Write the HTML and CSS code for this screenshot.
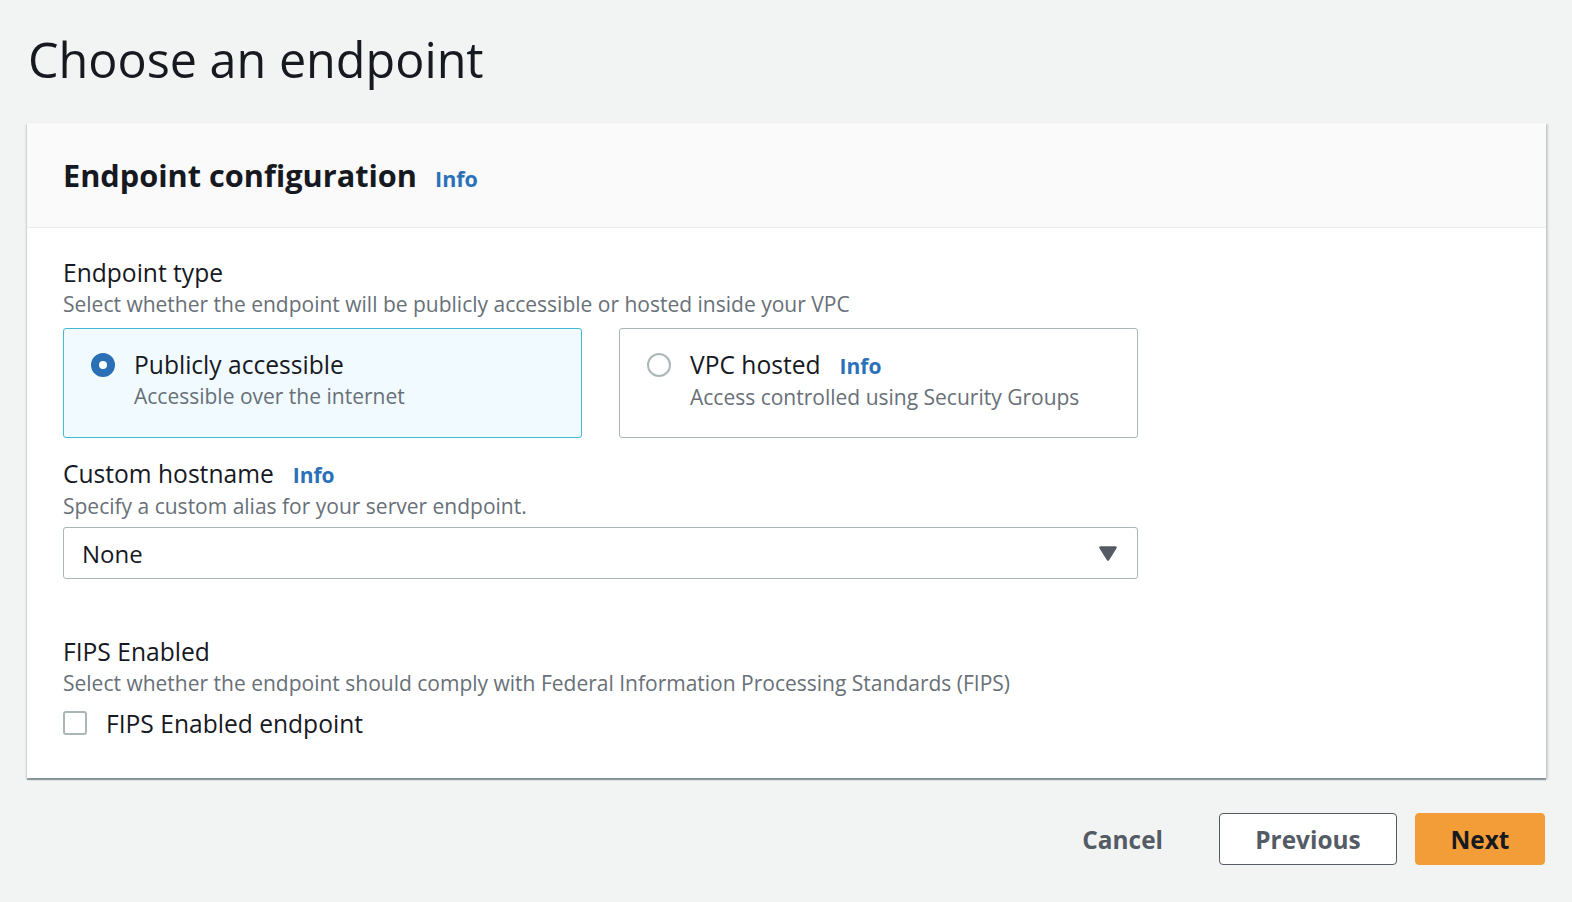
FILE: index.html
```html
<!DOCTYPE html>
<html lang="en">
<head>
<meta charset="utf-8">
<title>Choose an endpoint</title>
<link rel="stylesheet" href="styles.css">
</head>
<body>
<div class="page">
  <h1 class="page-title">Choose an endpoint</h1>

  <section class="container">
    <header class="container-header">
      <h2 class="container-title">Endpoint configuration</h2>
      <a class="info-link" href="#">Info</a>
    </header>

    <div class="container-body">
      <div class="field">
        <div class="field-label">Endpoint type</div>
        <div class="field-desc">Select whether the endpoint will be publicly accessible or hosted inside your VPC</div>
        <div class="tiles">
          <div class="tile tile-selected">
            <span class="radio radio-checked"></span>
            <div class="tile-text">
              <div class="tile-title">Publicly accessible</div>
              <div class="tile-desc">Accessible over the internet</div>
            </div>
          </div>
          <div class="tile">
            <span class="radio"></span>
            <div class="tile-text">
              <div class="tile-title">VPC hosted<a class="info-link info-inline" href="#">Info</a></div>
              <div class="tile-desc">Access controlled using Security Groups</div>
            </div>
          </div>
        </div>
      </div>

      <div class="field field-hostname">
        <div class="field-label">Custom hostname<a class="info-link info-inline" href="#">Info</a></div>
        <div class="field-desc">Specify a custom alias for your server endpoint.</div>
        <div class="select">
          <span class="select-value">None</span>
          <svg class="caret" width="18" height="15" viewBox="0 0 18 15" aria-hidden="true"><path d="M1.5 1.5 H16.5 L9 13.5 Z" fill="#545b64" stroke="#545b64" stroke-width="2.5" stroke-linejoin="round"/></svg>
        </div>
      </div>

      <div class="field field-fips">
        <div class="field-label">FIPS Enabled</div>
        <div class="field-desc">Select whether the endpoint should comply with Federal Information Processing Standards (FIPS)</div>
        <label class="checkbox-row">
          <span class="checkbox"></span>
          <span class="checkbox-label">FIPS Enabled endpoint</span>
        </label>
      </div>
    </div>
  </section>

  <div class="actions">
    <button class="btn btn-link">Cancel</button>
    <button class="btn btn-normal">Previous</button>
    <button class="btn btn-primary">Next</button>
  </div>
</div>
</body>
</html>
```

FILE: styles.css
```css
html, body {
  margin: 0;
  padding: 0;
}

body {
  background: #f2f3f3;
  font-family: "Open Sans", "Noto Sans", sans-serif;
  color: #16191f;
}

.page {
  padding: 0 26px 0 27px;
}

.page-title {
  margin: 0;
  padding: 29px 0 34px 1px;
  font-size: 48.5px;
  line-height: 60px;
  font-weight: 400;
  color: #16191f;
}

.container {
  background: #ffffff;
  box-shadow: 0 2px 1px 0 rgba(0, 28, 36, 0.35), 2px 1px 2px 0 rgba(0, 28, 36, 0.15), -1px 1px 2px 0 rgba(0, 28, 36, 0.12);
}

.container-header {
  height: 104px;
  display: flex;
  align-items: baseline;
  padding: 0 36px;
  background: #fafafa;
  border-bottom: 1px solid #eaeded;
  box-sizing: content-box;
  line-height: 104px;
}

.container-title {
  margin: 0;
  font-size: 30.7px;
  font-weight: 700;
  color: #16191f;
}

.info-link {
  margin-left: 18px;
  font-size: 21.5px;
  font-weight: 700;
  color: #2a71b8;
  text-decoration: none;
}

.info-inline {
  margin-left: 19px;
  font-size: 21px;
}

.container-body {
  padding: 29px 36px 39px;
}

.field {
  width: 1075px;
}

.field-label {
  font-size: 24.6px;
  line-height: 32px;
  color: #16191f;
}

.field-desc {
  font-size: 21px;
  line-height: 30px;
  color: #687078;
}

.tiles {
  margin-top: 9px;
  display: grid;
  grid-template-columns: 1fr 1fr;
  gap: 37px;
}

.tile {
  display: flex;
  align-items: flex-start;
  gap: 19px;
  padding: 20px 24px 25px 27px;
  border: 1px solid #aab7b8;
  border-radius: 3px;
  background: #ffffff;
}

.tile-selected {
  background: #f1faff;
  border-color: #44b9d6;
}

.radio {
  flex: none;
  width: 24px;
  height: 24px;
  margin-top: 4px;
  box-sizing: border-box;
  border-radius: 50%;
  border: 2px solid #aab7b8;
  background: #ffffff;
}

.radio-checked {
  border: 8px solid #2b6fb6;
}

.tile-title {
  font-size: 24.6px;
  line-height: 32px;
  color: #16191f;
}

.tile-desc {
  font-size: 21px;
  line-height: 30px;
  color: #687078;
}

.field-hostname {
  margin-top: 20px;
}

.select {
  margin-top: 6px;
  height: 50px;
  display: flex;
  align-items: center;
  justify-content: space-between;
  padding: 0 20px 0 18px;
  border: 1px solid #aab7b8;
  border-radius: 3px;
  background: #ffffff;
}

.select-value {
  font-size: 24px;
  color: #16191f;
}

.caret {
  display: block;
}

.field-fips {
  margin-top: 57px;
}

.checkbox-row {
  margin-top: 9px;
  display: flex;
  align-items: center;
  gap: 19px;
  height: 32px;
}

.checkbox {
  width: 24px;
  height: 24px;
  box-sizing: border-box;
  border: 2px solid #aab7b8;
  border-radius: 3px;
  background: #ffffff;
}

.checkbox-label {
  font-size: 24.6px;
  color: #16191f;
}

.actions {
  margin-top: 35px;
  display: flex;
  justify-content: flex-end;
  align-items: center;
  gap: 18px;
  padding-right: 1px;
}

.btn {
  height: 52px;
  font-family: "Open Sans", "Noto Sans", sans-serif;
  font-size: 24.4px;
  font-weight: 700;
  border-radius: 4px;
  cursor: pointer;
}

.btn-link {
  background: transparent;
  border: none;
  color: #545b64;
  padding: 0 38px 0 34px;
}

.btn-normal {
  width: 178px;
  background: #ffffff;
  border: 1px solid #545b64;
  color: #545b64;
}

.btn-primary {
  width: 130px;
  background: #f29d38;
  border: 1px solid #f29d38;
  color: #16191f;
}
```
